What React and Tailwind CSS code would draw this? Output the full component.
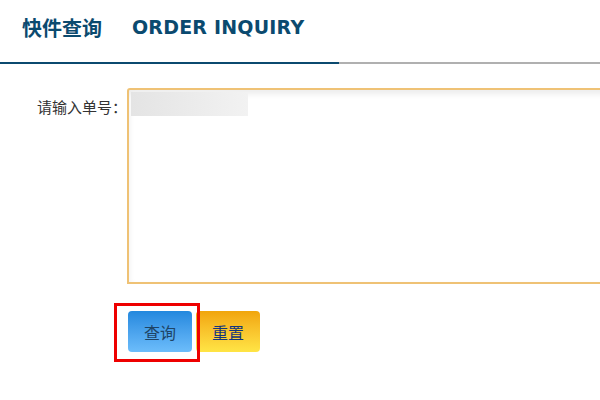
export default function App() {
  return (
    <div className="h-[400px] w-[600px] overflow-hidden bg-white font-['DejaVu_Sans','Noto_Sans_CJK_SC',sans-serif]">
      <div className="flex h-[62px] items-center gap-[30px] pl-[22px] pb-[7px] text-[19px] font-bold text-[#0b4a6f]">
        <span className="font-['Noto_Sans_CJK_SC',sans-serif] text-[20px]">快件查询</span>
        <span className="tracking-[0.2px]">ORDER INQUIRY</span>
      </div>
      <div className="flex h-[2px]">
        <div className="w-[339px] bg-[#0b4a6f]" />
        <div className="flex-1 bg-[#b0b0b0]" />
      </div>

      <div className="mt-[24px] flex">
        <label className="w-[127px] shrink-0 pt-[8px] text-right font-['Noto_Sans_CJK_SC',sans-serif] text-[15px] text-[#333]">
          请输入单号：
        </label>
        <div className="h-[196px] w-[500px] shrink-0 rounded-tl-[3px] border-2 border-[#efc275] bg-white shadow-[inset_0_4px_6px_rgba(0,0,0,0.08)]">
          <div className="ml-[2px] mt-[2px] h-[24px] w-[117px] bg-gradient-to-r from-[#e4e4e4] to-[#f2f2f2]" />
        </div>
      </div>

      <div className="relative mt-[27px] flex gap-[4px] pl-[128px] font-['Noto_Sans_CJK_SC',sans-serif] text-[16px]">
        <button className="h-[41px] w-[64px] rounded-[4px] bg-gradient-to-b from-[#2288de] to-[#6cbdfb] text-[#1e4466]">
          查询
        </button>
        <button className="h-[41px] w-[64px] rounded-[4px] bg-gradient-to-b from-[#f1a50a] to-[#ffe545] text-[#14357d]">
          重置
        </button>
        <div className="absolute left-[114px] top-[-8px] h-[59px] w-[86px] border-[3px] border-[#ee0000]" />
      </div>
    </div>
  );
}
